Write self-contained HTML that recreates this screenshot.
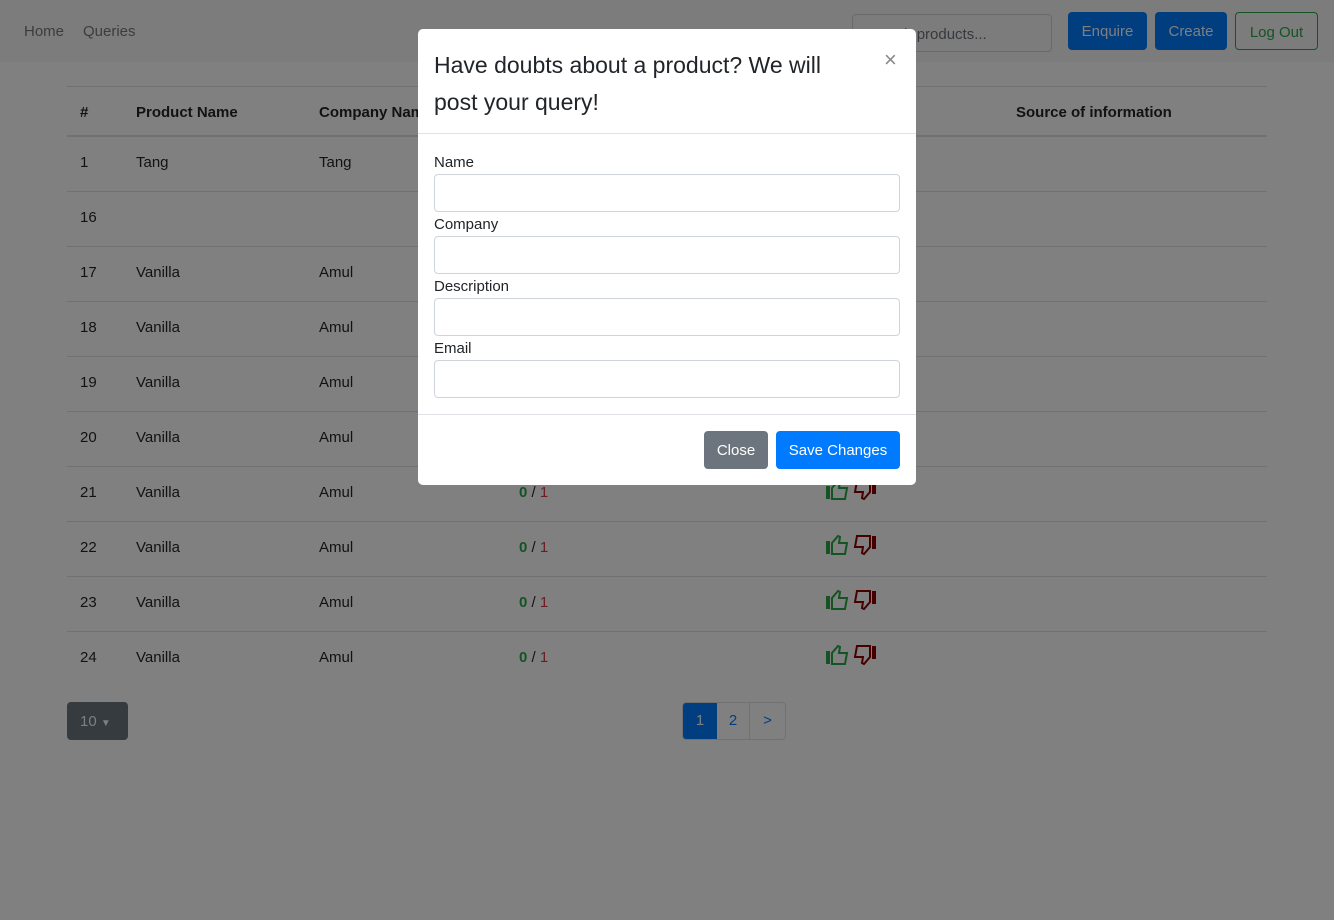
<!DOCTYPE html>
<html><head><style>
body{margin:0;width:1334px;height:920px;position:relative;background:#808080;font-family:"Liberation Sans",sans-serif;font-size:15px;color:#111213;overflow:hidden}
.nav{position:absolute;left:0;top:0;width:1334px;height:62px;background:#7c7c7d}
.nav a{position:absolute;top:23px;color:#3c3c3c;font-size:15px}
.btn{position:absolute;top:12px;height:38px;box-sizing:border-box;border-radius:4px;font-size:15px;line-height:40px;text-align:center}
table{position:absolute;left:67px;top:86px;width:1200px;border-collapse:collapse}
td,th{text-align:left;padding:0 0 0 13px;height:54px;border-top:1px solid #6f7173}
td{height:50px;padding-bottom:4px}
th{height:46px;border-bottom:2px solid #6f7173;font-size:15px;padding-top:2px}
.g{color:#145423;font-weight:bold}.r{color:#6e1b22}
.modal{position:absolute;left:418px;top:29px;width:498px;height:456px;background:#fff;border-radius:5px;color:#212529}
.modal h5{margin:0;position:absolute;left:16px;top:18px;width:420px;font-size:23px;font-weight:normal;line-height:37px}
.x{position:absolute;left:466px;top:18px;font-size:22px;color:#888}
.lab{position:absolute;left:16px;font-size:15px;top:0}
.inp{position:absolute;left:16px;width:466px;height:38px;box-sizing:border-box;border:1px solid #ced4da;border-radius:4px}
.hr{position:absolute;left:0;width:498px;border-top:1px solid #dee2e6}
</style></head><body>
<div class="nav">
<a style="left:24px">Home</a><a style="left:83px">Queries</a>
<div class="btn" style="left:852px;top:14px;width:200px;border:1px solid #676a6d;color:#36393c;text-align:left;padding-left:12px">Search products...</div>
<div class="btn" style="left:1068px;width:79px;background:#003e80;color:#7f7f7f">Enquire</div>
<div class="btn" style="left:1155px;width:72px;background:#003e80;color:#7f7f7f">Create</div>
<div class="btn" style="left:1235px;width:83px;border:1px solid #145423;color:#145423">Log Out</div>
</div>
<table>
<tr><th style="width:43px">#</th><th style="width:170px">Product Name</th><th style="width:187px">Company Name</th><th style="width:294px">Votes</th><th style="width:177px">Vote</th><th>Source of information</th></tr>
<tr><td>1</td><td>Tang</td><td>Tang</td><td></td><td></td><td></td></tr>
<tr><td>16</td><td></td><td></td><td></td><td></td><td></td></tr>
<tr><td>17</td><td>Vanilla</td><td>Amul</td><td></td><td></td><td></td></tr>
<tr><td>18</td><td>Vanilla</td><td>Amul</td><td></td><td></td><td></td></tr>
<tr><td>19</td><td>Vanilla</td><td>Amul</td><td></td><td></td><td></td></tr>
<tr><td>20</td><td>Vanilla</td><td>Amul</td><td></td><td></td><td></td></tr>
<tr><td>21</td><td>Vanilla</td><td>Amul</td><td><span class="g">0</span> / <span class="r">1</span></td><td></td><td></td></tr>
<tr><td>22</td><td>Vanilla</td><td>Amul</td><td><span class="g">0</span> / <span class="r">1</span></td><td></td><td></td></tr>
<tr><td>23</td><td>Vanilla</td><td>Amul</td><td><span class="g">0</span> / <span class="r">1</span></td><td></td><td></td></tr>
<tr><td>24</td><td>Vanilla</td><td>Amul</td><td><span class="g">0</span> / <span class="r">1</span></td><td></td><td></td></tr>
</table>
<svg style="position:absolute;left:0;top:0" width="1334" height="920">
<g id="t">
<rect x="826" y="486" width="4" height="13" fill="#145423"/>
<path d="M832 499 V488 L838 481 L840 482 L839 488 H847 L845 499 Z" fill="none" stroke="#145423" stroke-width="2"/>
<rect x="872" y="481" width="4" height="13" fill="#460000"/>
<path d="M870 481 V492 L864 499 L862 498 L863 492 H855 L857 481 Z" fill="none" stroke="#460000" stroke-width="2"/>
</g>
<use href="#t" y="55"/><use href="#t" y="110"/><use href="#t" y="165"/>
</svg>
<div class="btn" style="left:67px;top:702px;width:61px;background:#363b3f;color:#7f7f7f;text-align:left;padding-left:13px">10 <span style="font-size:10px">▼</span></div>
<div style="position:absolute;left:682px;top:702px;height:36px;display:flex;border:1px solid #6f7173;border-radius:4px;overflow:hidden">
<div style="width:34px;background:#003e80;color:#7f7f7f;text-align:center;line-height:36px">1</div>
<div style="width:32px;color:#003e80;text-align:center;line-height:36px;border-right:1px solid #6f7173">2</div>
<div style="width:35px;color:#003e80;text-align:center;line-height:36px">&gt;</div>
</div>
<div class="modal">
<h5>Have doubts about a product? We will post your query!</h5>
<div class="x">×</div>
<div class="hr" style="top:104px"></div>
<div class="lab" style="top:125px">Name</div><div class="inp" style="top:145px"></div>
<div class="lab" style="top:187px">Company</div><div class="inp" style="top:207px"></div>
<div class="lab" style="top:249px">Description</div><div class="inp" style="top:269px"></div>
<div class="lab" style="top:311px">Email</div><div class="inp" style="top:331px"></div>
<div class="hr" style="top:385px"></div>
<div class="btn" style="left:286px;top:402px;width:64px;background:#6c757d;color:#fff">Close</div>
<div class="btn" style="left:358px;top:402px;width:124px;background:#007bff;color:#fff">Save Changes</div>
</div>
</body></html>
